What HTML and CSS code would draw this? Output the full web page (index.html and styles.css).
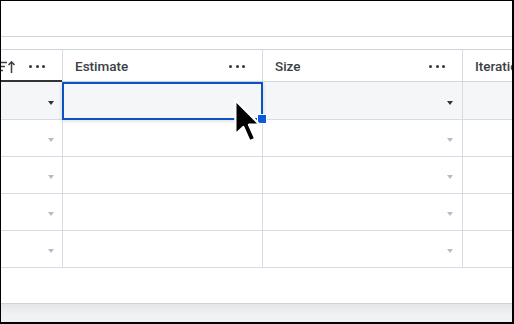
FILE: index.html
```html
<!DOCTYPE html>
<html>
<head>
<meta charset="utf-8">
<link rel="stylesheet" href="styles.css">
</head>
<body>
<div class="frame">
  <div class="toolbar"></div>
  <div class="strip"></div>
  <div class="table">
    <div class="row head">
      <div class="cell c1">
        <svg class="sort" width="16" height="14" viewBox="0 0 16 14">
          <path d="M-2 2.5h9M-2 6.5h7M-2 10.5h5" stroke="#3b4046" stroke-width="1.5" fill="none"/>
          <path d="M11.5 13V2M8.5 5l3-3.2 3 3.2" stroke="#3b4046" stroke-width="1.5" fill="none"/>
        </svg>
        <span class="dots"><i></i><i></i><i></i></span>
      </div>
      <div class="cell"><span class="title">Estimate</span><span class="dots"><i></i><i></i><i></i></span></div>
      <div class="cell"><span class="title">Size</span><span class="dots"><i></i><i></i><i></i></span></div>
      <div class="cell last"><span class="title">Iteration</span></div>
    </div>
    <div class="row first">
      <div class="cell c1"><span class="caret dark"></span></div>
      <div class="cell selected"><span class="handle"></span></div>
      <div class="cell"><span class="caret dark"></span></div>
      <div class="cell last"></div>
    </div>
    <div class="row">
      <div class="cell c1"><span class="caret"></span></div>
      <div class="cell"></div>
      <div class="cell"><span class="caret"></span></div>
      <div class="cell last"></div>
    </div>
    <div class="row">
      <div class="cell c1"><span class="caret"></span></div>
      <div class="cell"></div>
      <div class="cell"><span class="caret"></span></div>
      <div class="cell last"></div>
    </div>
    <div class="row">
      <div class="cell c1"><span class="caret"></span></div>
      <div class="cell"></div>
      <div class="cell"><span class="caret"></span></div>
      <div class="cell last"></div>
    </div>
    <div class="row">
      <div class="cell c1"><span class="caret"></span></div>
      <div class="cell"></div>
      <div class="cell"><span class="caret"></span></div>
      <div class="cell last"></div>
    </div>
  </div>
  <div class="spacer"></div>
  <div class="bottom"></div>
  <svg class="cursor" width="32" height="50" viewBox="0 0 28 44">
    <path d="M2 2 L2 32 L9 25.5 L14.5 38 L19.5 35.8 L14 23.5 L23.5 23.5 Z" fill="#000" stroke="#fff" stroke-width="2" stroke-linejoin="round"/>
  </svg>
</div>
</body>
</html>
```
FILE: styles.css
```css
* { box-sizing: border-box; }
html, body { margin: 0; padding: 0; background: #fff; }
.frame {
  position: relative;
  width: 514px;
  height: 324px;
  border-top: 1px solid #000;
  border-left: 1px solid #000;
  border-right: 2px solid #000;
  border-bottom: 2px solid #000;
  overflow: hidden;
  display: flex;
  flex-direction: column;
  font-family: Roboto, "Liberation Sans", sans-serif;
  background: #fff;
}
.toolbar { height: 36px; flex: none; border-bottom: 1px solid #cdd5dc; }
.strip { height: 13px; flex: none; border-bottom: 1px solid #cdd5dc; }
.table { flex: none; display: flex; flex-direction: column; }
.row {
  display: grid;
  grid-template-columns: 62px 200px 200px 1fr;
  height: 37px;
  border-bottom: 1px solid #d5dce4;
}
.row.head { height: 32px; border-bottom: 1px solid #d0d7de; }
.row.first { height: 38px; background: #f5f6f8; }
.cell {
  position: relative;
  border-right: 1px solid #d5dce4;
  display: flex;
  align-items: center;
  justify-content: space-between;
  padding: 0 18px 0 12px;
}
.cell.last { border-right: none; overflow: hidden; }
.head .cell { padding: 1px 17px 0 12px; }
.title { font-size: 13.5px; font-weight: 500; color: #3b4046; white-space: nowrap; }
.sort { display: block; margin-left: -1px; }
.dots { display: flex; gap: 3.5px; }
.dots i { width: 3px; height: 3px; border-radius: 50%; background: #2f343a; display: block; }
.c1 { padding: 0 8px 0 0; justify-content: flex-end; }
.head .c1 {
  justify-content: space-between;
  padding: 1px 17px 0 0;
  box-shadow: inset 0 -2px 0 #2f343a;
  margin-bottom: -1px;
}
.row .cell:nth-child(3) { justify-content: flex-end; padding-right: 9px; }
.row.head .cell:nth-child(3) { justify-content: space-between; padding-right: 17px; }
.caret {
  width: 0; height: 0;
  border-left: 3.5px solid transparent;
  border-right: 3.5px solid transparent;
  border-top: 4px solid #b8bcc2;
  margin-top: 4px;
}
.caret.dark { border-top-color: #2f343a; }
.selected::after {
  content: "";
  position: absolute;
  left: -1px; top: 0; right: -1px; bottom: -1px;
  border: 2px solid #0b52c4;
  box-shadow: 0 1px 4px rgba(0,0,0,0.15);
}
.handle {
  position: absolute;
  right: -5px; bottom: -5px;
  width: 10px; height: 10px;
  background: #0b5ad9;
  border: 1px solid #fff;
  z-index: 2;
}
.spacer { height: 35px; flex: none; }
.bottom {
  flex: 1;
  border-top: 1px solid #cfd2d6;
  background: linear-gradient(#e4e6ea, #f1f2f4 60%);
}
.cursor { position: absolute; left: 232px; top: 97px; z-index: 5; }
```
